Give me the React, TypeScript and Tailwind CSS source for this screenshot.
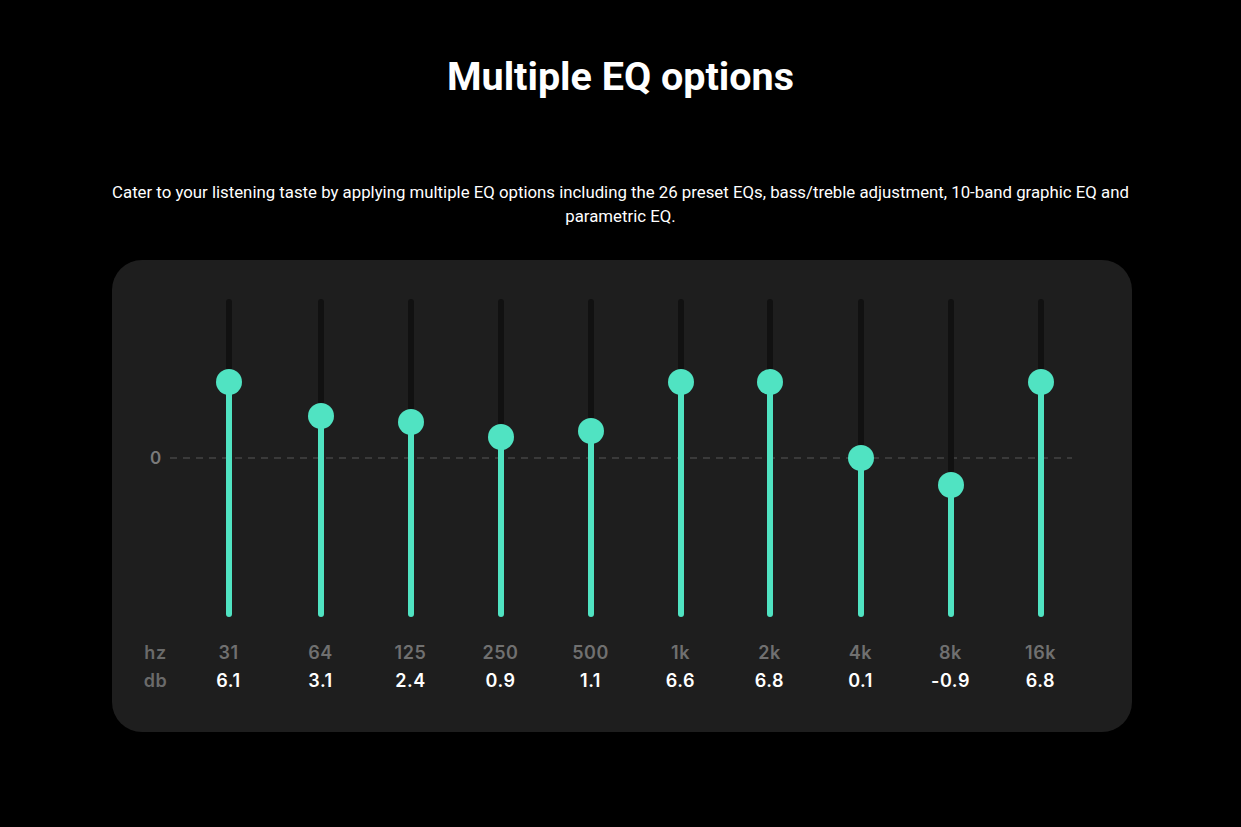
const bands = [
  { hz: "31", db: "6.1", y: 83, dx: -2 },
  { hz: "64", db: "3.1", y: 117, dx: 0 },
  { hz: "125", db: "2.4", y: 123, dx: 0 },
  { hz: "250", db: "0.9", y: 138, dx: 0 },
  { hz: "500", db: "1.1", y: 132, dx: 0 },
  { hz: "1k", db: "6.6", y: 83, dx: 0 },
  { hz: "2k", db: "6.8", y: 83, dx: -1 },
  { hz: "4k", db: "0.1", y: 159, dx: 0 },
  { hz: "8k", db: "-0.9", y: 186, dx: 0 },
  { hz: "16k", db: "6.8", y: 83, dx: 0 },
];

// track is 318px tall, zero line sits at 159
const TRACK = 318;

export default function App() {
  return (
    <div className="min-h-screen bg-black text-white font-['Roboto',sans-serif]">
      <div className="pt-[54px] pb-[95px]">
        {/* HEADING */}
        <h1 className="text-center text-[39.5px] leading-[46px] font-bold">Multiple EQ options</h1>

        {/* SUBTEXT */}
        <p className="mx-auto mt-[80px] w-[1024px] text-center text-[16.8px] leading-[24px] text-white">
          Cater to your listening taste by applying multiple EQ options including the 26 preset EQs, bass/treble adjustment, 10-band graphic EQ and parametric EQ.
        </p>

        {/* EQ PANEL */}
        <div className="mx-auto mt-[32px] w-[1020px] translate-x-[1px] rounded-[30px] bg-[#1e1e1e] pl-[28px] pt-[39px] pb-[39px] font-['Inter',sans-serif]">
          <div className="relative flex h-[318px]">
            <svg className="absolute left-[30px] top-[158px]" width="902" height="2">
              <line x1="0" y1="1" x2="902" y2="1" stroke="#3a3a3a" strokeWidth="2" strokeDasharray="7 6" />
            </svg>
            <div className="relative w-[32px]">
              <span className="absolute left-0 right-0 top-[149px] text-center text-[17px] leading-[20px] font-semibold text-[#7a7a7a]">0</span>
            </div>
            <div className="ml-[14px] flex">
              {bands.map((b, i) => (
                <Slider key={i} y={b.y} dx={b.dx} />
              ))}
            </div>
          </div>

          <div className="mt-[24px] flex text-[18px] leading-[24px] font-semibold tracking-[0.03em]">
            <div className="w-[32px] text-center text-[#6a6a6a]">hz</div>
            <div className="ml-[14px] flex">
              {bands.map((b, i) => (
                <div key={i} className="w-[90px] text-center text-[#707070]" style={{ marginLeft: b.dx, marginRight: -b.dx }}>{b.hz}</div>
              ))}
            </div>
          </div>
          <div className="mt-[4px] flex text-[18px] leading-[24px] font-semibold tracking-[0.03em]">
            <div className="w-[32px] text-center text-[#6a6a6a]">db</div>
            <div className="ml-[14px] flex">
              {bands.map((b, i) => (
                <div key={i} className="w-[90px] text-center text-white" style={{ marginLeft: b.dx, marginRight: -b.dx }}>{b.db}</div>
              ))}
            </div>
          </div>
        </div>
      </div>
    </div>
  );
}

function Slider({ y, dx }: { y: number; dx: number }) {
  return (
    <div className="relative flex w-[90px] justify-center" style={{ marginLeft: dx, marginRight: -dx }}>
      <div className="flex w-[6px] flex-col overflow-hidden rounded-full">
        <div className="bg-[#111111]" style={{ height: y }} />
        <div className="flex-1 bg-[#50e3c2]" style={{ height: TRACK - y }} />
      </div>
      <div
        className="absolute left-1/2 h-[26px] w-[26px] -translate-x-1/2 -translate-y-1/2 rounded-full bg-[#50e3c2]"
        style={{ top: y }}
      />
    </div>
  );
}
